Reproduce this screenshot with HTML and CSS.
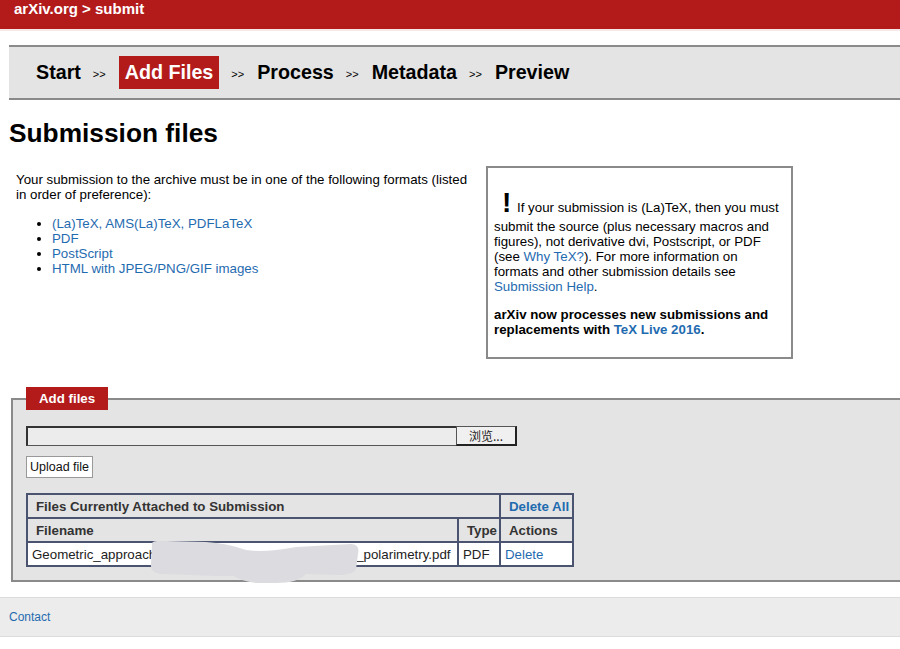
FILE: index.html
```html
<!DOCTYPE html>
<html lang="en">
<head>
    <meta charset="UTF-8">
    <title>arXiv.org &gt; submit</title>
    <link rel="stylesheet" href="styles.css">
</head>
<body>

    <!-- cabeçalho vermelho -->
    <div class="masthead">arXiv.org &gt; submit</div>

    <div class="page">

        <div class="steps">
            <span class="step">Start</span>
            <span class="sep">&gt;&gt;</span>
            <span class="step current">Add Files</span>
            <span class="sep">&gt;&gt;</span>
            <span class="step">Process</span>
            <span class="sep">&gt;&gt;</span>
            <span class="step">Metadata</span>
            <span class="sep">&gt;&gt;</span>
            <span class="step">Preview</span>
        </div>

        <h1>Submission files</h1>

        <div class="intro">
            <div class="formats">
                <p>Your submission to the archive must be in one of the following formats (listed in order of preference):</p>
                <ul>
                    <li><a href="#">(La)TeX, AMS(La)TeX, PDFLaTeX</a></li>
                    <li><a href="#">PDF</a></li>
                    <li><a href="#">PostScript</a></li>
                    <li><a href="#">HTML with JPEG/PNG/GIF images</a></li>
                </ul>
            </div>

            <div class="notice">
                <p><span class="bang">!</span> If your submission is (La)TeX, then you must submit the source (plus necessary macros and figures), not derivative dvi, Postscript, or PDF (see <a href="#">Why TeX?</a>). For more information on formats and other submission details see <a href="#">Submission Help</a>.</p>
                <p class="strong">arXiv now processes new submissions and replacements with <a href="#">TeX Live 2016</a>.</p>
            </div>
        </div>

        <fieldset class="addfiles">
            <legend>Add files</legend>

            <div class="file-input">
                <span class="file-name"></span>
                <span class="file-browse">浏览...</span>
            </div>

            <button class="upload">Upload file</button>

            <table class="attached">
                <colgroup>
                    <col class="c-name">
                    <col class="c-type">
                    <col class="c-act">
                </colgroup>
                <tr class="head">
                    <th colspan="2">Files Currently Attached to Submission</th>
                    <th class="act"><a href="#">Delete All</a></th>
                </tr>
                <tr class="head">
                    <th>Filename</th>
                    <th class="type">Type</th>
                    <th class="act">Actions</th>
                </tr>
                <tr class="row">
                    <td class="fname">Geometric_approach<span class="hidden"><svg class="blur" width="220" height="46" viewBox="0 0 220 46">
                        <path d="M6 6 Q4 1 20 2 L60 3 Q80 4 100 11 Q118 14 150 8 L205 5 Q214 5 212 15 L210 30 Q208 36 190 36 L160 35 Q152 44 130 44 L110 44 Q95 42 88 37 L70 37 L14 35 Q4 33 5 25 Z" fill="#dcdce0"/>
                    </svg></span>_polarimetry.pdf</td>
                    <td>PDF</td>
                    <td><a href="#">Delete</a></td>
                </tr>
            </table>
        </fieldset>
    </div>

    <div class="footer">
        <a href="#">Contact</a>
    </div>

</body>
</html>
```

FILE: styles.css
```css
    html, body {
        margin: 0;
        padding: 0;
    }

    body {
        font-family: "Liberation Sans", Arial, sans-serif;
        font-size: 13.3px;
        color: #000;
        background-color: #fff;
        overflow-x: hidden;
    }

    a {
        color: #1f6bb0;
        text-decoration: none;
    }

    .masthead {
        background-color: #b31b1b;
        color: white;
        font-weight: bold;
        font-size: 15px;
        line-height: 17px;
        height: 29px;
        padding-left: 14px;
        border-bottom: 2px solid #f6e8e8;
    }

    .page {
        padding-left: 9px;
    }

    /* barra de etapas */
    .steps {
        margin-top: 14px;
        background-color: #e4e4e4;
        border-top: 2px solid #8a8a8a;
        border-bottom: 2px solid #8a8a8a;
        height: 51px;
        padding-left: 27px;
        display: flex;
        align-items: center;
    }

    .step {
        font-size: 19.7px;
        font-weight: bold;
        line-height: 33px;
    }

    .step.current {
        background-color: #b31b1b;
        color: white;
        padding: 0 6px;
    }

    .sep {
        font-size: 11px;
        margin: 3px 13px 0 12px;
    }

    h1 {
        font-size: 26.3px;
        line-height: 30px;
        margin: 18px 0 0 0;
    }

    .intro {
        display: flex;
        align-items: flex-start;
        margin-top: 18px;
    }

    .formats {
        width: 462px;
        padding-left: 7px;
        margin-right: 8px;
    }

    .formats p {
        margin: 6px 0 0 0;
        line-height: 15px;
    }

    .formats ul {
        margin: 14px 0 0 0;
        padding-left: 36px;
        line-height: 15px;
    }

    .notice {
        width: 291px;
        border: 2px solid #8a8a8a;
        padding: 18px 6px 20px 6px;
        line-height: 15px;
    }

    .notice p {
        margin: 0;
    }

    .notice .strong {
        font-weight: bold;
        margin-top: 13px;
    }

    .bang {
        font-size: 28px;
        line-height: 33px;
        font-weight: bold;
        margin-left: 8px;
        margin-right: 2px;
    }

    /* caixa de envio */
    .addfiles {
        margin: 28px -40px 0 2px;
        border: 2px solid #8a8a8a;
        background-color: #e4e4e4;
        padding: 0 0 13px 13px;
    }

    .addfiles legend {
        background-color: #b31b1b;
        color: white;
        font-weight: bold;
        font-size: 13.3px;
        line-height: 23px;
        padding: 0 13px;
    }

    .file-input {
        display: flex;
        margin-top: 16px;
        width: 491px;
        height: 20px;
    }

    .file-name {
        flex: 1;
        border-top: 2px solid #333;
        border-left: 2px solid #333;
        border-bottom: 1px solid #555;
        background-color: #ececec;
    }

    .file-browse {
        width: 58px;
        border: 1px solid #555;
        border-right: 2px solid #222;
        border-bottom: 2px solid #222;
        background-color: #f0f0f0;
        font-family: "Noto Sans CJK SC", sans-serif;
        font-size: 12px;
        line-height: 17px;
        text-align: center;
        color: #222;
    }

    .upload {
        display: block;
        margin-top: 10px;
        background-color: white;
        border: 1px solid #999;
        font-family: "Liberation Sans", Arial, sans-serif;
        font-size: 12.5px;
        height: 22px;
        padding: 0 3px;
        color: #111;
    }

    .attached {
        margin-top: 15px;
        width: 546px;
        table-layout: fixed;
        border-collapse: collapse;
        border: 2px solid #4a5370;
    }

    .c-name { width: 431px; }
    .c-type { width: 42px; }
    .c-act { width: 73px; }

    .attached th, .attached td {
        border: 2px solid #4a5370;
        height: 22px;
        padding: 0 8px;
        text-align: left;
        white-space: nowrap;
        overflow: visible;
    }

    .attached th {
        color: #333;
        background-color: #e4e4e4;
    }

    .attached .type {
        padding: 0 2px 0 4px;
        text-align: right;
    }

    .attached td {
        background-color: white;
        padding: 0 4px;
        color: #222;
    }

    .hidden {
        display: inline-block;
        position: relative;
        width: 200px;
        height: 12px;
    }

    .blur {
        position: absolute;
        left: -10px;
        top: -8px;
    }

    .footer {
        margin-top: 15px;
        background-color: #ececec;
        border-top: 1px solid #dcdcdc;
        border-bottom: 1px solid #dcdcdc;
        height: 38px;
        padding-left: 9px;
        font-size: 12px;
        line-height: 38px;
    }
```
